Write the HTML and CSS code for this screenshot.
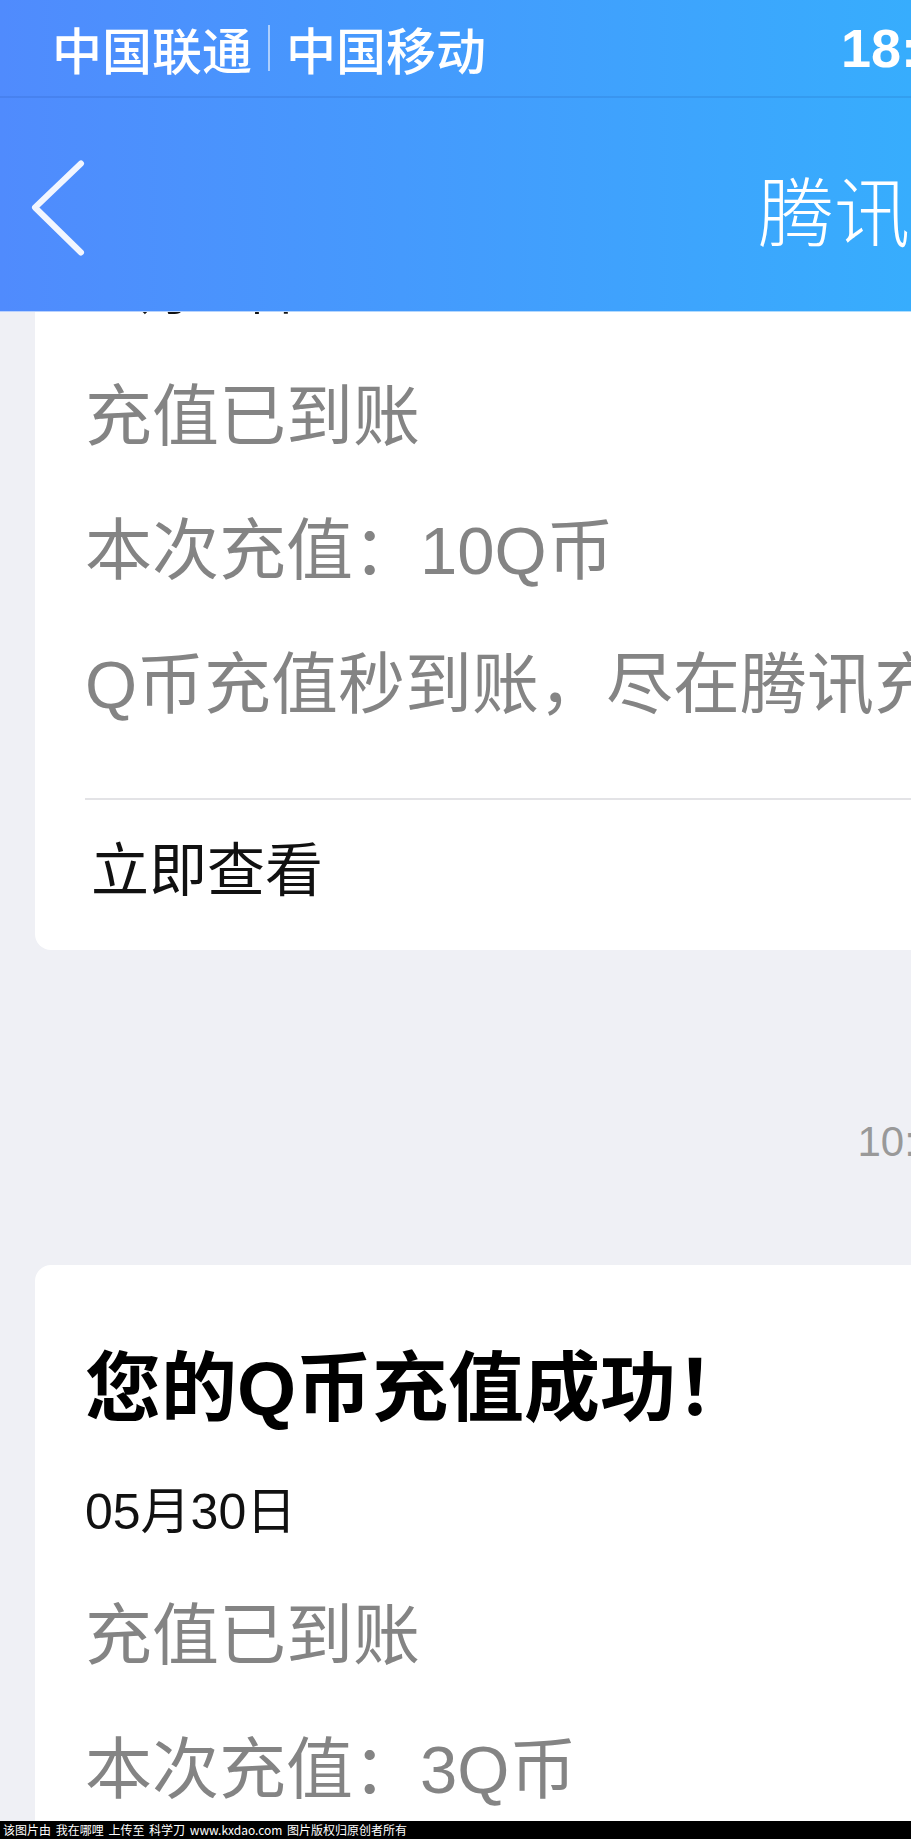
FILE: index.html
```html
<!DOCTYPE html>
<html lang="zh-CN">
<head>
    <meta charset="UTF-8">
    <meta name="viewport" content="width=device-width, initial-scale=1.0">
    <title>腾讯充值</title>
    <link rel="stylesheet" href="styles.css">
</head>
<body>

<div class="screen">
    <header class="topbar">
        <div class="status">
            <div class="carrier">
                <span>中国联通</span>
                <i class="sim-sep"></i>
                <span>中国移动</span>
            </div>
            <div class="clock">18:30</div>
            <div class="status-right">100%</div>
        </div>
        <div class="nav">
            <a class="back" href="#">
                <svg viewBox="0 0 60 100">
                    <path d="M51 5.5 L5 49.5 L51 94.5" fill="none" stroke="#f2f6ff" stroke-width="6" stroke-linecap="round" stroke-linejoin="round"/>
                </svg>
            </a>
            <h1>腾讯充值</h1>
            <div></div>
        </div>
    </header>

    <main class="feed">
        <section class="card first">
            <h2 class="card-title">您的Q币充值成功！</h2>
            <div class="card-date">05月30日</div>
            <div class="card-body">
                <p>充值已到账</p>
                <p>本次充值：10Q币</p>
                <p>Q币充值秒到账，尽在腾讯充值中心</p>
            </div>
            <hr class="card-divider">
            <div class="card-action">立即查看</div>
        </section>

        <div class="stamp">10:21</div>

        <section class="card">
            <h2 class="card-title">您的Q币充值成功！</h2>
            <div class="card-date">05月30日</div>
            <div class="card-body">
                <p>充值已到账</p>
                <p>本次充值：3Q币</p>
                <p>Q币充值秒到账，尽在腾讯充值中心</p>
            </div>
            <hr class="card-divider">
            <div class="card-action">立即查看</div>
        </section>
    </main>
</div>

<div class="watermark">该图片由 我在哪哩 上传至 科学刀 www.kxdao.com 图片版权归原创者所有</div>

</body>
</html>
```
FILE: styles.css
```css
* {
    box-sizing: border-box;
}
html, body {
    margin: 0;
}
body {
    width: 911px;
    height: 1839px;
    overflow: hidden;
    background-color: #eff0f5;
    font-family: "Liberation Sans", "Noto Sans CJK SC", sans-serif;
}
.screen {
    width: 1820px;
    height: 1821px;
    display: flex;
    flex-direction: column;
}

/* 상단 바 */
.topbar {
    background: linear-gradient(90deg, #508bfd 0, #37adfd 911px, #22c6fd 1820px);
    color: #fff;
}
.status {
    height: 98px;
    padding: 0 52px;
    border-bottom: 2px solid rgba(20, 60, 140, 0.12);
    display: grid;
    grid-template-columns: 1fr auto 1fr;
    align-items: center;
}
.carrier {
    display: flex;
    align-items: center;
    gap: 16px;
    font: 500 50px/96px "Noto Sans CJK SC", sans-serif;
}
.sim-sep {
    width: 2px;
    height: 46px;
    background-color: rgba(255, 255, 255, 0.55);
}
.clock {
    font: bold 54px/96px "Liberation Sans", sans-serif;
}
.status-right {
    text-align: right;
    font: bold 44px/96px "Liberation Sans", sans-serif;
}
.nav {
    height: 214px;
    padding-top: 6px;
    border-bottom: 1px solid rgba(255, 255, 255, 0.6);
    display: grid;
    grid-template-columns: 1fr auto 1fr;
    align-items: center;
}
.back {
    display: flex;
    padding-left: 30px;
}
.back svg {
    width: 60px;
    height: 100px;
}
.nav h1 {
    margin: 0;
    font: 300 76px/110px "Noto Sans CJK SC", sans-serif;
}

/* 메시지 목록 */
.feed {
    flex: 1;
    overflow: hidden;
    padding: 0 35px;
}
.card {
    background-color: #fff;
    border-radius: 16px;
    padding: 74px 50px 8px;
}
.card.first {
    margin-top: -266px;
}
.card-title {
    margin: 0;
    font-size: 76px;
    line-height: 100px;
    font-weight: bold;
    color: #000;
}
.card-date {
    margin-top: 43px;
    font-size: 50px;
    line-height: 60px;
    color: #111;
}
.card-body {
    margin-top: 27px;
}
.card-body p {
    margin: 0;
    font-size: 67px;
    line-height: 134px;
    color: #848484;
    white-space: nowrap;
}
.card-divider {
    margin: 46px 0 0;
    height: 2px;
    border: 0;
    background-color: #e3e3e6;
}
.card-action {
    padding-left: 6px;
    font-size: 58px;
    line-height: 142px;
    color: #111;
}
.stamp {
    padding: 162px 0 93px;
    text-align: center;
    font-size: 42px;
    line-height: 60px;
    color: #999;
}

.watermark {
    height: 18px;
    padding-left: 3px;
    background-color: #000;
    color: #fff;
    font: 12px/18px "Noto Sans CJK SC", sans-serif;
    word-spacing: 2px;
    white-space: nowrap;
}
```
